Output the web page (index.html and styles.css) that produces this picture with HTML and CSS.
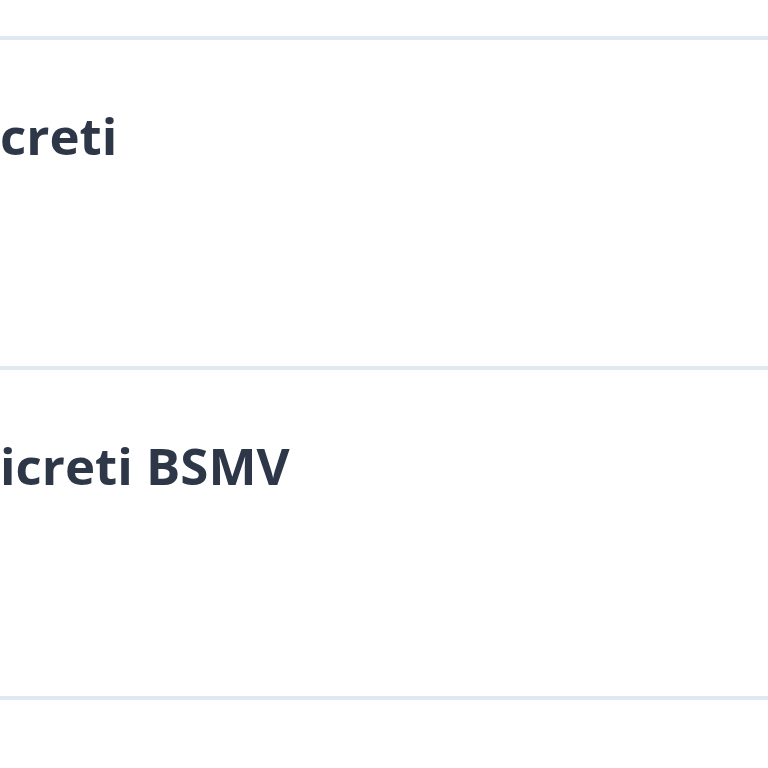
FILE: index.html
```html
<!DOCTYPE html>
<html lang="it">
<head>
<meta charset="utf-8">
<link rel="stylesheet" href="styles.css">
</head>
<body>
<div class="list">
  <div class="row"><h2 class="title">creti</h2></div>
  <div class="row"><h2 class="title">icreti BSMV</h2></div>
</div>
</body>
</html>
```
FILE: styles.css
```css
html, body {
  margin: 0;
  padding: 0;
  background: #ffffff;
  overflow: hidden;
}
.list {
  padding-top: 36px;
}
.row {
  border-top: 4px solid #e2e8f0;
  height: 326px;
}
.row:last-child {
  border-bottom: 4px solid #e2e8f0;
}
.title {
  margin: 0;
  padding-top: 55px;
  font-family: "Open Sans", "Noto Sans", sans-serif;
  font-weight: 700;
  font-size: 51px;
  line-height: 80px;
  color: #2d3748;
  white-space: nowrap;
}
```
